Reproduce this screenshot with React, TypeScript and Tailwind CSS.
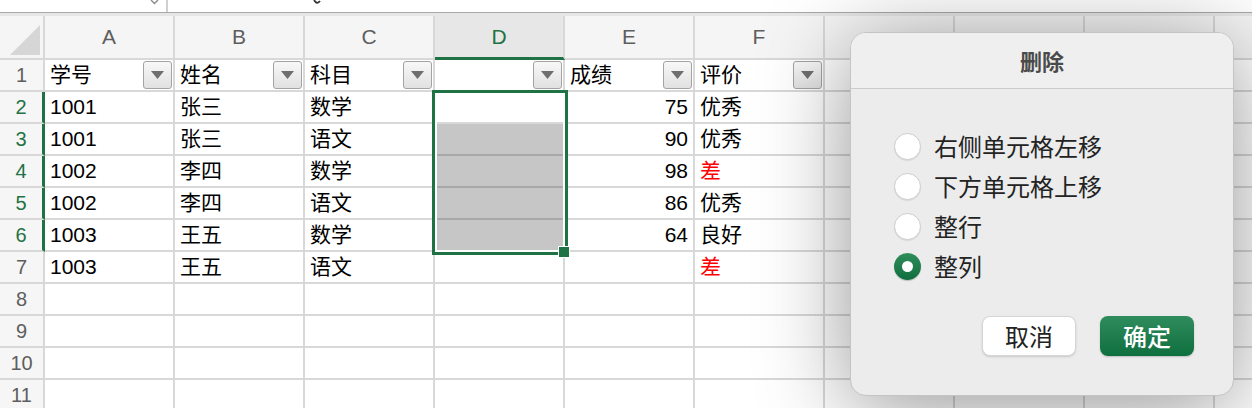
import React from 'react';

const COLS = ['A', 'B', 'C', 'D', 'E', 'F', 'G', 'H', 'I', 'J'];
// letters of G..J sit under the dialog in the reference
const VISIBLE_LETTERS = ['A', 'B', 'C', 'D', 'E', 'F'];

type Row = { id: string; name: string; subject: string; score: string; grade: string; bad?: boolean };

const rows: Row[] = [
  { id: '1001', name: '张三', subject: '数学', score: '75', grade: '优秀' },
  { id: '1001', name: '张三', subject: '语文', score: '90', grade: '优秀' },
  { id: '1002', name: '李四', subject: '数学', score: '98', grade: '差', bad: true },
  { id: '1002', name: '李四', subject: '语文', score: '86', grade: '优秀' },
  { id: '1003', name: '王五', subject: '数学', score: '64', grade: '良好' },
  { id: '1003', name: '王五', subject: '语文', score: '', grade: '差', bad: true },
];

// Filter dropdown on the header row
const FilterButton: React.FC = () => (
  <div className="w-[29px] h-[28px] mb-[1px] shrink-0 rounded-[3px] border border-[#a3a3a3] bg-gradient-to-b from-[#f8f8f8] to-[#e1e1e1] flex items-center justify-center">
    <svg width="13" height="8" viewBox="0 0 13 8">
      <polygon points="0,0 13,0 6.5,8" fill="#6e6e6e" />
    </svg>
  </div>
);

const Radio: React.FC<{ checked?: boolean; label: string }> = ({ checked, label }) => (
  <div className="h-[40px] flex items-center gap-[13px]">
    {checked ? (
      <div className="w-[27px] h-[27px] rounded-full bg-gradient-to-b from-[#2f8d5a] to-[#0f6e3e] flex items-center justify-center shadow-[0_1px_1px_rgba(0,0,0,0.2)]">
        <div className="w-[11px] h-[11px] rounded-full bg-white" />
      </div>
    ) : (
      <div className="w-[27px] h-[27px] rounded-full bg-white border border-[#cdcdcd] shadow-[0_1px_1px_rgba(0,0,0,0.08)]" />
    )}
    <span className="text-[24px] leading-none text-[#232323]">{label}</span>
  </div>
);

const DeleteDialog: React.FC = () => (
  <div
    className="absolute left-[850px] top-[32px] w-[384px] h-[364px] rounded-[16px] bg-[#ececec] border border-[#c4c4c4] shadow-[0_12px_90px_rgba(0,0,0,0.42)] overflow-hidden flex flex-col"
    style={{ fontFamily: '"Noto Sans CJK SC", "Liberation Sans", sans-serif' }}
  >
    <div className="h-[56px] shrink-0 bg-[#efeff0] border-b border-[#cbcbcb] flex items-center justify-center">
      <span className="text-[22px] font-bold text-[#4a4a4a]">删除</span>
    </div>
    <div className="flex-1 pl-[43px] pr-[39px] pt-[37px] flex flex-col">
      <Radio label="右侧单元格左移" />
      <Radio label="下方单元格上移" />
      <Radio label="整行" />
      <Radio checked label="整列" />
      <div className="mt-[30px] flex justify-end gap-[24px]">
        <button className="w-[94px] h-[40px] rounded-[8px] bg-white border border-[#d6d6d6] shadow-[0_1px_2px_rgba(0,0,0,0.15)] text-[24px] leading-none text-[#222]">
          取消
        </button>
        <button className="w-[94px] h-[40px] rounded-[8px] bg-gradient-to-b from-[#2f8c5c] to-[#0d6f3f] shadow-[0_1px_2px_rgba(0,0,0,0.2)] text-[24px] leading-none text-white font-medium">
          确定
        </button>
      </div>
    </div>
  </div>
);

const cellBase = 'border-r-2 border-b-2 border-[#d8d8d8]';

export default function App() {
  return (
    <div
      className="relative w-[1252px] h-[408px] overflow-hidden bg-white"
      style={{ fontFamily: '"Liberation Sans", "Noto Sans CJK SC", sans-serif' }}
    >
      {/* Formula bar strip (cut off at the top) */}
      <div className="h-[12px] flex bg-white">
        <div className="w-[168px] relative border-r-2 border-[#d0d0d0]">
          <svg className="absolute left-[150px] top-0" width="9" height="5" viewBox="0 0 9 5">
            <path d="M1 0 L4.5 3.5 L8 0" stroke="#8a8a8a" strokeWidth="1.4" fill="none" />
          </svg>
        </div>
        <div className="flex-1 relative">
          <svg className="absolute left-[145px] top-0" width="8" height="5" viewBox="0 0 8 5">
            <path d="M1 0 Q4 5 7 1" stroke="#333" strokeWidth="1.8" fill="none" />
          </svg>
        </div>
      </div>
      <div className="h-[4px] border-t border-[#a8a8a8] bg-[#e6e6e6]" />

      {/* Sheet grid */}
      <div className="relative">
        <div className="grid grid-cols-[45px_repeat(10,130px)] grid-rows-[44px_repeat(11,32px)] text-[21px] text-black">
          {/* corner */}
          <div className={`${cellBase} bg-[#f5f5f5] relative`}>
            <svg className="absolute right-[3px] bottom-[3px]" width="30" height="30" viewBox="0 0 30 30">
              <polygon points="30,0 30,30 0,30" fill="#d6d6d6" />
            </svg>
          </div>
          {COLS.map((c) =>
            c === 'D' ? (
              <div
                key={c}
                className="border-r-2 border-[#d8d8d8] border-b-[3px] border-b-[#1f7244] bg-[#e7e7e7] flex items-center justify-center text-[#1f7244]"
              >
                {c}
              </div>
            ) : (
              <div key={c} className={`${cellBase} bg-[#f5f5f5] flex items-center justify-center text-[#5e5e5e]`}>
                {VISIBLE_LETTERS.includes(c) ? c : ''}
              </div>
            ),
          )}

          {/* row 1: headers with filters */}
          <div className={`${cellBase} bg-[#f6f6f6] flex items-center justify-center text-[20px] text-[#5e5e5e]`}>1</div>
          {['学号', '姓名', '科目', '', '成绩', '评价'].map((h, i) => (
            <div key={i} className={`${cellBase} flex items-center justify-between pl-[5px] pr-[1px]`}>
              <span>{h}</span>
              <div className="self-end">
                <FilterButton />
              </div>
            </div>
          ))}
          {COLS.slice(6).map((c) => (
            <div key={c} className={cellBase} />
          ))}

          {/* data rows */}
          {rows.map((r, i) => {
            const rowNo = i + 2;
            const inSel = rowNo <= 6;
            const grayD = rowNo >= 3 && rowNo <= 6;
            return (
              <React.Fragment key={rowNo}>
                <div
                  className={
                    inSel
                      ? 'border-b-2 border-[#d8d8d8] border-r-[3px] border-r-[#1f7244] bg-[#f6f6f6] flex items-center justify-center text-[20px] text-[#1f7244]'
                      : `${cellBase} bg-[#f6f6f6] flex items-center justify-center text-[20px] text-[#5e5e5e]`
                  }
                >
                  {rowNo}
                </div>
                <div className={`${cellBase} flex items-center pl-[5px]`}>{r.id}</div>
                <div className={`${cellBase} flex items-center pl-[5px]`}>{r.name}</div>
                <div className={`${cellBase} flex items-center pl-[5px]`}>{r.subject}</div>
                <div className={grayD ? 'border-r-2 border-b-2 border-[#d8d8d8] border-b-[#a8a8a8] bg-[#c6c6c6]' : cellBase} />
                <div className={`${cellBase} flex items-center justify-end pr-[5px]`}>{r.score}</div>
                <div className={`${cellBase} flex items-center pl-[5px] ${r.bad ? 'text-[#ff0000]' : ''}`}>{r.grade}</div>
                {COLS.slice(6).map((c) => (
                  <div key={c} className={cellBase} />
                ))}
              </React.Fragment>
            );
          })}

          {/* empty rows 8-11 */}
          {[8, 9, 10, 11].map((n) => (
            <React.Fragment key={n}>
              <div className={`${cellBase} bg-[#f6f6f6] flex items-center justify-center text-[20px] text-[#5e5e5e]`}>{n}</div>
              {COLS.map((c) => (
                <div key={c} className={cellBase} />
              ))}
            </React.Fragment>
          ))}
        </div>

        {/* selection D2:D6 */}
        <div className="absolute left-[432px] top-[74px] w-[136px] h-[165px] border-[3px] border-[#1f7244]">
          <div className="w-full h-full border-2 border-white" />
        </div>
        <div className="absolute left-[558px] top-[230px] w-[12px] h-[12px] bg-[#1f7244] border border-white" />
      </div>

      <DeleteDialog />
    </div>
  );
}
